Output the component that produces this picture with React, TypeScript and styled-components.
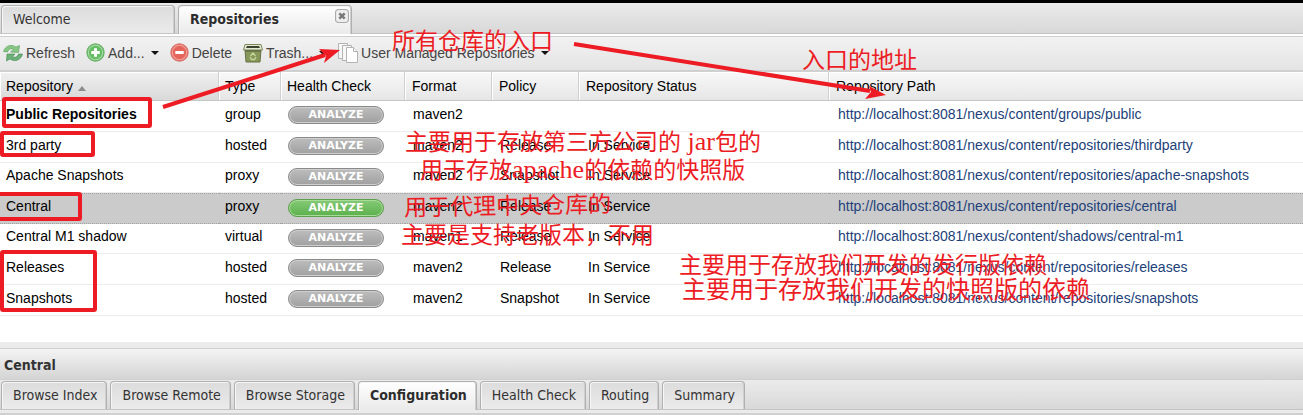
import React from 'react';
import styled, { createGlobalStyle, css } from 'styled-components';

const ui = '"DejaVu Sans Condensed", "DejaVu Sans", sans-serif';
const grid = '"Liberation Sans", Arial, sans-serif';

const Global = createGlobalStyle`
  * { box-sizing: border-box; }
  body { margin: 0; background: #fff; color: #000; font-family: ${grid}; font-size: 14px; }
  button { font: inherit; color: inherit; margin: 0; padding: 0; border: 0; background: none; cursor: pointer; }
`;

const Page = styled.div`
  position: relative;
  display: flex;
  flex-direction: column;
  overflow: hidden;
`;

const TopEdge = styled.div`
  height: 3px;
  background: #000;
`;

const TabStrip = styled.nav<{ $top: number }>`
  display: flex;
  gap: 3px;
  padding: ${p => p.$top}px 0 0 1px;
  background: linear-gradient(#ebebeb, #d8d8d8);
  border-bottom: 1px solid #c4c4c4;
`;

const Tab = styled.button<{ $active?: boolean; $wide?: boolean }>`
  position: relative;
  flex: none;
  height: 28px;
  line-height: 27px;
  padding: 0 9px 0 11px;
  text-align: left;
  white-space: nowrap;
  font-family: ${ui};
  font-size: 14px;
  color: #333;
  border: 1px solid #b0b0b0;
  border-bottom: 0;
  border-radius: 4px 4px 0 0;
  box-shadow: inset 1px 1px 0 #f6f6f6, inset -1px 0 0 #cfcfcf;
  background: linear-gradient(#dcdcdc, #ebebeb);
  ${p => p.$wide && css`width: 174px;`}
  ${p => p.$active && css`
    font-weight: bold;
    color: #2d2d2d;
    background: linear-gradient(#fff, #eaeaea);
    margin-bottom: -1px;
    padding-bottom: 1px;
    height: 29px;
  `}
`;

const CloseMark = styled.svg`
  position: absolute;
  top: 3px;
  right: 2px;
`;

const Toolbar = styled.div`
  display: flex;
  align-items: center;
  height: 36px;
  margin-top: 2px;
  padding: 0 3px 2px;
  gap: 11px;
  border-top: 1px solid #cfcfcf;
  border-bottom: 2px solid #d0d0d0;
  background: linear-gradient(#f2f2f2, #e4e4e4);
`;

const Tool = styled.button`
  display: flex;
  align-items: center;
  gap: 3px;
  white-space: nowrap;
  color: #444;
  svg { flex: none; }
`;

const Caret = styled.span`
  width: 0;
  margin-left: 3px;
  border: 4px solid transparent;
  border-top-color: #111;
  border-bottom: 0;
`;

const Table = styled.table`
  width: 100%;
  table-layout: fixed;
  border-collapse: separate;
  border-spacing: 0;
`;

const Head = styled.th<{ $indent?: number }>`
  height: 29px;
  padding: 0 7px 0 ${p => p.$indent ?? 6}px;
  text-align: left;
  font-weight: normal;
  white-space: nowrap;
  border-right: 1px solid #d0d0d0;
  border-bottom: 1px solid #c6c6c6;
  box-shadow: inset 1px 1px 0 #fff;
  background: linear-gradient(#f8f8f8, #e6e6e6);
  &:first-child { background: linear-gradient(#f0f0f0, #d9d9d9); }
  &:last-child { border-right: 0; }
`;

const SortMark = styled.span`
  display: inline-block;
  margin-left: 5px;
  border: 4px solid transparent;
  border-top: 0;
  border-bottom: 5px solid #8c8c8c;
`;

const Row = styled.tr<{ $selected?: boolean }>`
  height: 31px;
  &:nth-child(3), &:nth-child(5) { height: 30px; }
  td { border-bottom: 1px solid #ededed; }
  ${p => p.$selected && css`
    td {
      background: #cbcbcb;
      border-top: 1px dotted #a3a3a3;
      border-bottom: 1px dotted #a3a3a3;
    }
  `}
`;

const Cell = styled.td<{ $bold?: boolean; $indent?: number }>`
  padding: 0 0 5px ${p => p.$indent ?? 6}px;
  line-height: 16px;
  white-space: nowrap;
  font-weight: ${p => (p.$bold ? 'bold' : 'normal')};
`;

const Link = styled.a`
  color: #223f7a;
  text-decoration: none;
`;

const Analyze = styled.button<{ $on?: boolean }>`
  display: block;
  width: 96px;
  height: 18px;
  margin-top: 3px;
  border-radius: 9px;
  border: 1px solid ${p => (p.$on ? '#5f9d50' : '#8a8a8a')};
  box-shadow: inset 0 0 0 1px ${p => (p.$on ? '#a7dd98' : '#cfcfcf')};
  background: ${p => (p.$on ? 'linear-gradient(#86ca77, #5cb04c)' : 'linear-gradient(#bdbdbd, #a0a0a0)')};
  color: #fff;
  font: bold 11px/16px "DejaVu Sans", sans-serif;
  text-align: center;
`;

const Splitter = styled.div`
  height: 6px;
  margin-top: 26px;
  background: #ebebeb;
`;

const DetailTitle = styled.h2`
  margin: 0;
  height: 32px;
  padding: 0 4px;
  font: bold 14px/32px ${ui};
  color: #333;
  border-top: 1px solid #cfcfcf;
  border-bottom: 1px solid #cfcfcf;
  background: linear-gradient(#f4f4f4, #d4d4d4);
`;

const Footer = styled.div`
  height: 5px;
  background: #ebebeb;
  border-bottom: 2px solid #d0d0d0;
`;

const Marks = styled.svg`
  position: absolute;
  inset: 0;
  width: 100%;
  height: 100%;
  pointer-events: none;
`;

const Note = styled.div<{ $x: number; $y: number; $size?: number; $tilt?: number }>`
  position: absolute;
  left: ${p => p.$x}px;
  top: ${p => p.$y}px;
  font: ${p => p.$size ?? 23}px/26px "Noto Sans CJK SC", sans-serif;
  color: #ed1c24;
  white-space: nowrap;
  pointer-events: none;
  ${p => p.$tilt && css`transform: rotate(${p.$tilt}deg);`}
`;

const Latin = styled.span`
  font-family: "Liberation Serif", serif;
  font-size: 26px;
  line-height: 20px;
`;

const RefreshIcon = () => (
  <svg width="20" height="20" viewBox="0 0 20 20" strokeWidth=".6">
    <path d="M.5 8.500C2 3 8 .5 13 4L16.500 2.500L15.500 9.500L7.500 9L10.500 6.500C8 5 5.500 6 4.500 9Z" fill="#86c784" stroke="#559b5c" />
    <path d="M19.500 11C18 17 12 19.500 7 16L3.500 18L4 11L12 11L9.500 13.500C12 15 14.500 14 15.500 11Z" fill="#6bb077" stroke="#438a56" />
  </svg>
);

const RoundIcon = ({ add }: { add?: boolean }) => (
  <svg width="19" height="19" viewBox="0 0 18 18">
    <circle cx="9" cy="9" r="8.200" fill={add ? '#66bd66' : '#e5655c'} stroke={add ? '#6bb06c' : '#d4736c'} />
    <circle cx="9" cy="9" r="6.800" fill="none" stroke={add ? '#a8dca5' : '#f3a39c'} />
    <path d={add ? 'M9 5V13M5 9H13' : 'M5 9H13'} stroke="#fff" strokeWidth="2.800" />
  </svg>
);

const TrashIcon = () => (
  <svg width="20" height="20" viewBox="0 0 20 20">
    <path d="M2 7H18L17 19H3Z" fill="#87975a" stroke="#65713f" />
    <path d="M2 1.500H18L19.500 7H.5Z" fill="#e3e8d5" stroke="#7c8a58" />
    <path d="M4 3H16L17 5H3Z" fill="#3e4230" />
    <path d="M2 8H18" stroke="#56613a" />
    <path d="M7.500 13L10 10L12.500 13M13 14L11.500 16.500H8.500L7 14" fill="none" stroke="#c5d79a" strokeWidth="1.300" />
  </svg>
);

const PagesIcon = () => (
  <svg width="20" height="20" viewBox="0 0 20 20" fill="#f8f8f8" stroke="#b3b3b3">
    <path d="M.5 .5H9.500V15.500H.5Z" />
    <path d="M4.500 2.500H13.500V17.500H4.500Z" />
    <path d="M8.500 4.500H15.500L19.500 8.500V19.500H8.500Z" fill="#fff" />
    <path d="M15.500 4.500V8.500H19.500" />
  </svg>
);

const base = 'http://localhost:8081/nexus/content/';
const repos = [
  ['Public Repositories', 'group', 'maven2', '', '', 'groups/public'],
  ['3rd party', 'hosted', 'maven2', 'Release', 'In Service', 'repositories/thirdparty'],
  ['Apache Snapshots', 'proxy', 'maven2', 'Snapshot', 'In Service', 'repositories/apache-snapshots'],
  ['Central', 'proxy', 'maven2', 'Release', 'In Service', 'repositories/central'],
  ['Central M1 shadow', 'virtual', 'maven1', 'Release', 'In Service', 'shadows/central-m1'],
  ['Releases', 'hosted', 'maven2', 'Release', 'In Service', 'repositories/releases'],
  ['Snapshots', 'hosted', 'maven2', 'Snapshot', 'In Service', 'repositories/snapshots'],
];
const columns = ['Type', 'Health Check', 'Format', 'Policy', 'Repository Status', 'Repository Path'];
const details = ['Browse Index', 'Browse Remote', 'Browse Storage', 'Configuration', 'Health Check', 'Routing', 'Summary'];

export default function App() {
  return (
    <Page>
      <Global />
      <TopEdge />
      <TabStrip $top={2}>
        <Tab $wide>Welcome</Tab>
        <Tab $wide $active>
          Repositories
          <CloseMark width="14" height="14" viewBox="0 0 13 13">
            <rect x=".5" y=".5" width="12" height="12" rx="3" fill="#eee" stroke="#aaa" />
            <path d="M4 4L9 9M9 4L4 9" stroke="#777" strokeWidth="2.200" />
          </CloseMark>
        </Tab>
      </TabStrip>
      <Toolbar>
        <Tool><RefreshIcon />Refresh</Tool>
        <Tool><RoundIcon add />Add...<Caret /></Tool>
        <Tool><RoundIcon />Delete</Tool>
        <Tool><TrashIcon />Trash...<Caret /></Tool>
        <Tool><PagesIcon />User Managed Repositories<Caret /></Tool>
      </Toolbar>
      <Table>
        <colgroup>
          <col style={{ width: 219 }} />
          <col style={{ width: 62 }} />
          <col style={{ width: 124 }} />
          <col style={{ width: 87 }} />
          <col style={{ width: 87 }} />
          <col style={{ width: 250 }} />
          <col />
        </colgroup>
        <thead>
          <tr>
            <Head>Repository<SortMark /></Head>
            {columns.map((c, i) => <Head key={c} $indent={i > 1 ? 7 : 6}>{c}</Head>)}
          </tr>
        </thead>
        <tbody>
          {repos.map(([name, type, format, policy, status, path], i) => (
            <Row key={name} $selected={i === 3}>
              <Cell $bold={i === 0}>{name}</Cell>
              <Cell>{type}</Cell>
              <Cell $indent={7}><Analyze $on={i === 3}>ANALYZE</Analyze></Cell>
              <Cell $indent={8}>{format}</Cell>
              <Cell $indent={8}>{policy}</Cell>
              <Cell $indent={9}>{status}</Cell>
              <Cell $indent={9}><Link href={base + path}>{base + path}</Link></Cell>
            </Row>
          ))}
        </tbody>
      </Table>
      <Splitter />
      <DetailTitle>Central</DetailTitle>
      <TabStrip $top={1}>
        {details.map(d => <Tab key={d} $active={d === 'Configuration'}>{d}</Tab>)}
      </TabStrip>
      <Footer />
      <Marks fill="none" stroke="#ed1c24" strokeWidth="4">
        <rect x="4" y="99" width="146" height="27" rx="1" />
        <rect x="2" y="133" width="91" height="22" rx="1" />
        <rect x="-2" y="194" width="82" height="25" rx="1" />
        <rect x="2" y="252" width="93" height="58" rx="1" />
        <path d="M163 107L325 55M574 44L870 91" />
        <path d="M340 50L324 63L326 56L319 49ZM886 95L865 99L871 92L869 86Z" fill="#ed1c24" stroke="none" />
      </Marks>
      <Note $x={392} $y={26}>所有仓库的入口</Note>
      <Note $x={802} $y={45}>入口的地址</Note>
      <Note $x={405} $y={127}>主要用于存放第三方公司的<Latin> jar</Latin>包的</Note>
      <Note $x={420} $y={155}>用于存放<Latin>apache</Latin>的依赖的快照版</Note>
      <Note $x={404} $y={191} $tilt={-1}>用于代理中央仓库的</Note>
      <Note $x={401} $y={220}>主要是支持老版本，不用</Note>
      <Note $x={679} $y={250}>主要用于存放我们开发的发行版依赖</Note>
      <Note $x={682} $y={275} $size={24}>主要用于存放我们开发的快照版的依赖</Note>
    </Page>
  );
}
